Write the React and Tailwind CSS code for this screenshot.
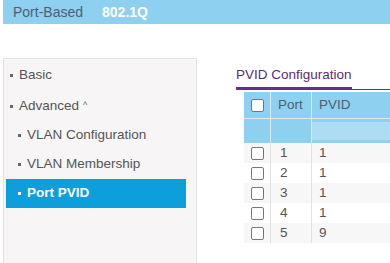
const rows = [
  { port: 1, pvid: 1 },
  { port: 2, pvid: 1 },
  { port: 3, pvid: 1 },
  { port: 4, pvid: 1 },
  { port: 5, pvid: 9 },
];

function Box() {
  return <span className="block h-[13px] w-[13px] rounded-[2px] border border-[#777] bg-white" />;
}

function MenuItem({ label, indent, active, caret }) {
  return (
    <div
      className={`flex items-center ${indent ? "h-[29px] pl-[12px]" : "h-[30px] pl-[4px]"} ${
        active ? "bg-[#0d9fdb] font-bold text-white" : "text-[#555]"
      }`}
    >
      <span className={`mr-[6px] h-[3px] w-[3px] ${active ? "bg-white" : "bg-[#666]"}`} />
      <span>{label}</span>
      {caret && <span className="ml-[4px] text-[9px] text-[#666]">^</span>}
    </div>
  );
}

export default function App() {
  return (
    <div className="h-[263px] w-[390px] overflow-hidden bg-white font-['Liberation_Sans',Arial,sans-serif]">
      <div className="ml-[3px] flex h-[24px] items-center bg-[#8dd0f0] text-[14px]">
        <span className="ml-[10px] text-[#4d5f70]">Port-Based</span>
        <span className="ml-[19px] font-bold text-white">802.1Q</span>
      </div>

      <div className="mt-[34px] flex">
        <div className="ml-[3px] h-[220px] w-[194px] border border-[#e4e2e2] bg-[#f7f5f5] pl-[2px] pt-[1px] text-[13.5px]">
          <MenuItem label="Basic" />
          <div className="h-[1px]" />
          <MenuItem label="Advanced" caret />
          <div className="w-[180px]">
            <MenuItem label="VLAN Configuration" indent />
            <MenuItem label="VLAN Membership" indent />
            <MenuItem label="Port PVID" indent active />
          </div>
        </div>

        <div className="ml-[39px] flex-1">
          <div className="mt-[7px] flex">
            <div className="border-b-[3px] border-[#6a2c86] pb-[2px] text-[13.5px] text-[#5b2a7c]">
              PVID Configuration
            </div>
            <div className="flex-1 border-b border-[#6a2c86]" />
          </div>

          <div className="ml-[8px] mt-[2px] text-[13.5px] text-[#555]">
            <div className="flex h-[26px] bg-[#8dd0f0]">
              <div className="flex w-[27px] items-center justify-center border-r border-[#dfeaf0]">
                <Box />
              </div>
              <div className="flex w-[41px] items-center border-r border-[#dfeaf0] pl-[7px] text-[#4d5f70]">
                Port
              </div>
              <div className="flex flex-1 items-center pl-[7px] text-[#4d5f70]">PVID</div>
            </div>
            <div className="flex h-[25px] border-t border-[#dfeaf0] bg-[#8dd0f0]">
              <div className="w-[27px] border-r border-[#dfeaf0]" />
              <div className="w-[41px] border-r border-[#dfeaf0]" />
              <div className="my-[3px] flex-1 bg-[#aedcf2]" />
            </div>
            {rows.map((r, i) => (
              <div
                key={r.port}
                className={`flex h-[20px] ${i % 2 === 0 ? "bg-[#f7f7f7]" : "bg-white"}`}
              >
                <div className="flex w-[27px] items-center justify-center border-r border-[#e2e2e2]">
                  <Box />
                </div>
                <div className="flex w-[41px] items-center border-r border-[#e2e2e2] pl-[9px]">
                  {r.port}
                </div>
                <div className="flex flex-1 items-center pl-[7px]">{r.pvid}</div>
              </div>
            ))}
          </div>
        </div>
      </div>
    </div>
  );
}
